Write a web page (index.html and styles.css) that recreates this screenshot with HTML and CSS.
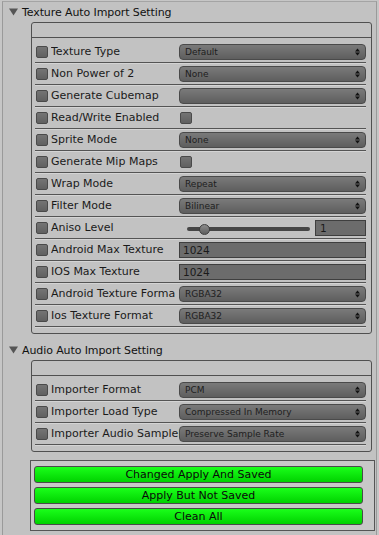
FILE: index.html
```html
<!DOCTYPE html>
<html lang="en">
<head>
    <meta charset="UTF-8">
    <title>Auto Import Setting</title>
    <link rel="stylesheet" href="styles.css">
</head>
<body>

<div class="inspector">
    <div class="foldout">
        <svg class="fold-arrow" width="9" height="8" viewBox="0 0 9 8"><polygon points="0,0.5 9,0.5 4.5,7.5" fill="#555"/></svg>
        Texture Auto Import Setting
    </div>
    <div class="group">
        <div class="group-head"></div>
        <div class="row"><span class="toggle"></span><span class="label">Texture Type</span><div class="popup"><span>Default</span><svg width="5" height="8" viewBox="0 0 5 8"><polygon points="0,3.5 5,3.5 2.5,0.5"/><polygon points="0,4.5 5,4.5 2.5,7.5"/></svg></div></div>
        <div class="row"><span class="toggle"></span><span class="label">Non Power of 2</span><div class="popup"><span>None</span><svg width="5" height="8" viewBox="0 0 5 8"><polygon points="0,3.5 5,3.5 2.5,0.5"/><polygon points="0,4.5 5,4.5 2.5,7.5"/></svg></div></div>
        <div class="row"><span class="toggle"></span><span class="label">Generate Cubemap</span><div class="popup"><span></span><svg width="5" height="8" viewBox="0 0 5 8"><polygon points="0,3.5 5,3.5 2.5,0.5"/><polygon points="0,4.5 5,4.5 2.5,7.5"/></svg></div></div>
        <div class="row"><span class="toggle"></span><span class="label">Read/Write Enabled</span><span class="toggle solo"></span></div>
        <div class="row"><span class="toggle"></span><span class="label">Sprite Mode</span><div class="popup"><span>None</span><svg width="5" height="8" viewBox="0 0 5 8"><polygon points="0,3.5 5,3.5 2.5,0.5"/><polygon points="0,4.5 5,4.5 2.5,7.5"/></svg></div></div>
        <div class="row"><span class="toggle"></span><span class="label">Generate Mip Maps</span><span class="toggle solo"></span></div>
        <div class="row"><span class="toggle"></span><span class="label">Wrap Mode</span><div class="popup"><span>Repeat</span><svg width="5" height="8" viewBox="0 0 5 8"><polygon points="0,3.5 5,3.5 2.5,0.5"/><polygon points="0,4.5 5,4.5 2.5,7.5"/></svg></div></div>
        <div class="row"><span class="toggle"></span><span class="label">Filter Mode</span><div class="popup"><span>Bilinear</span><svg width="5" height="8" viewBox="0 0 5 8"><polygon points="0,3.5 5,3.5 2.5,0.5"/><polygon points="0,4.5 5,4.5 2.5,7.5"/></svg></div></div>
        <div class="row"><span class="toggle"></span><span class="label">Aniso Level</span>
            <div class="slider"><div class="track"></div><div class="thumb"></div></div>
            <div class="field num">1</div>
        </div>
        <div class="row"><span class="toggle"></span><span class="label">Android Max Texture</span><div class="field">1024</div></div>
        <div class="row"><span class="toggle"></span><span class="label">IOS Max Texture</span><div class="field">1024</div></div>
        <div class="row"><span class="toggle"></span><span class="label">Android Texture Forma</span><div class="popup"><span>RGBA32</span><svg width="5" height="8" viewBox="0 0 5 8"><polygon points="0,3.5 5,3.5 2.5,0.5"/><polygon points="0,4.5 5,4.5 2.5,7.5"/></svg></div></div>
        <div class="row"><span class="toggle"></span><span class="label">Ios Texture Format</span><div class="popup"><span>RGBA32</span><svg width="5" height="8" viewBox="0 0 5 8"><polygon points="0,3.5 5,3.5 2.5,0.5"/><polygon points="0,4.5 5,4.5 2.5,7.5"/></svg></div></div>
    </div>

    <div class="foldout second">
        <svg class="fold-arrow" width="9" height="8" viewBox="0 0 9 8"><polygon points="0,0.5 9,0.5 4.5,7.5" fill="#555"/></svg>
        Audio Auto Import Setting
    </div>
    <div class="group">
        <div class="group-head"></div>
        <div class="row"><span class="toggle"></span><span class="label">Importer Format</span><div class="popup"><span>PCM</span><svg width="5" height="8" viewBox="0 0 5 8"><polygon points="0,3.5 5,3.5 2.5,0.5"/><polygon points="0,4.5 5,4.5 2.5,7.5"/></svg></div></div>
        <div class="row"><span class="toggle"></span><span class="label">Importer Load Type</span><div class="popup"><span>Compressed In Memory</span><svg width="5" height="8" viewBox="0 0 5 8"><polygon points="0,3.5 5,3.5 2.5,0.5"/><polygon points="0,4.5 5,4.5 2.5,7.5"/></svg></div></div>
        <div class="row"><span class="toggle"></span><span class="label">Importer Audio SampleF</span><div class="popup"><span>Preserve Sample Rate</span><svg width="5" height="8" viewBox="0 0 5 8"><polygon points="0,3.5 5,3.5 2.5,0.5"/><polygon points="0,4.5 5,4.5 2.5,7.5"/></svg></div></div>
    </div>

    <div class="actions">
        <div class="btn">Changed Apply And Saved</div>
        <div class="btn">Apply But Not Saved</div>
        <div class="btn">Clean All</div>
    </div>
</div>

</body>
</html>
```

FILE: styles.css
```css
body {
    margin: 0;
    background-color: #c6c6c6;
    font-family: "DejaVu Sans", sans-serif;
    font-size: 11px;
    color: #1a1a1a;
}
.inspector {
    margin: 1px 0 0 2px;
    width: 373px;
    height: 533px;
    border-top: 1px solid #a4a4a4;
    border-left: 1px solid #9a9a9a;
    border-right: 1px solid #9a9a9a;
    background-color: #c2c2c2;
    overflow: hidden;
}
.foldout {
    height: 20px;
    display: flex;
    align-items: center;
    padding-left: 6px;
    color: #111;
    letter-spacing: -0.1px;
}
.foldout.second {
    margin-top: 6px;
}
.fold-arrow {
    margin-right: 4px;
}
.group {
    margin-left: 28px;
    width: 339px;
    border: 1px solid #505050;
    border-radius: 3px;
    padding-bottom: 6px;
}
.group-head {
    height: 14px;
    border-bottom: 1px solid #505050;
    margin-bottom: 3px;
}
.row {
    display: flex;
    align-items: center;
    height: 21px;
    margin: 0 5px 0 3px;
    border-bottom: 1px solid #545454;
    box-shadow: 0 1px 0 #d4d4d4;
}
.toggle {
    flex: none;
    width: 10px;
    height: 10px;
    margin-left: 1px;
    border: 1px solid #4a4a4a;
    border-radius: 2px;
    background: linear-gradient(#747474, #606060);
}
.label {
    flex: none;
    width: 128px;
    margin-left: 3px;
    overflow: hidden;
    white-space: nowrap;
}
.popup {
    flex: 1;
    height: 14px;
    padding: 0 5px;
    display: flex;
    align-items: center;
    justify-content: space-between;
    border: 1px solid #4a4a4a;
    border-radius: 4px;
    background: linear-gradient(#7a7a7a, #5e5e5e);
    font-size: 9px;
    color: #1e1e1e;
    white-space: nowrap;
}
.popup svg {
    fill: #111;
}
.field {
    flex: 1;
    height: 14px;
    line-height: 14px;
    padding-left: 3px;
    border: 1px solid #3f3f3f;
    background-color: #6c6c6c;
    font-size: 10.5px;
    color: #1a1a1a;
}
.field.num {
    flex: none;
    width: 45px;
    padding-left: 4px;
}
.slider {
    flex: 1;
    position: relative;
    height: 16px;
    margin-right: 3px;
    padding: 0 2px 0 8px;
    display: flex;
    align-items: center;
}
.track {
    flex: 1;
    height: 4px;
    margin-top: 2px;
    border-radius: 2px;
    background-color: #464646;
}
.thumb {
    position: absolute;
    left: 20px;
    top: 4px;
    width: 9px;
    height: 9px;
    border: 1px solid #3e3e3e;
    border-radius: 50%;
    background: linear-gradient(#8c8c8c, #5e5e5e);
}
.actions {
    margin: 8px 0 0 27px;
    width: 329px;
    padding: 5px 11px 5px 3px;
    display: flex;
    flex-direction: column;
    gap: 4px;
    border: 1px solid #555;
    background-color: #c8c8c8;
}
.btn {
    height: 15px;
    line-height: 15px;
    text-align: center;
    border: 1px solid #4a4a4a;
    border-radius: 3px;
    background: linear-gradient(#1aff1a, #00d200);
    color: #0a0a0a;
}
```
